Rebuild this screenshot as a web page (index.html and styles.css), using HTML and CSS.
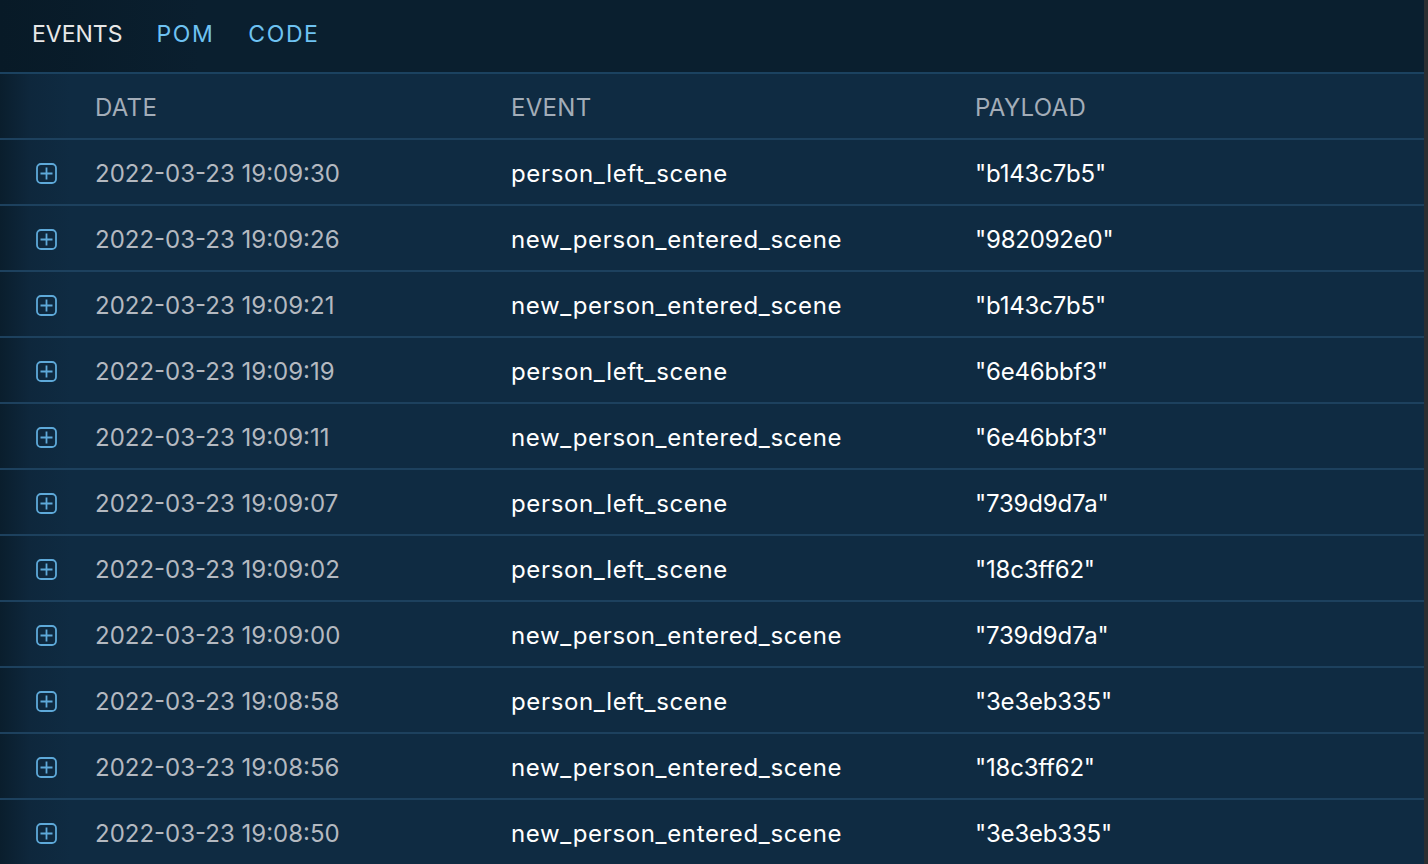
FILE: index.html
```html
<!DOCTYPE html>
<html>
<head>
<meta charset="utf-8">
<link rel="stylesheet" href="styles.css">
</head>
<body>
<div class="app">
  <div class="main">
    <nav class="tabs">
      <span class="tab active">EVENTS</span>
      <span class="tab">POM</span>
      <span class="tab">CODE</span>
    </nav>
    <div class="table">
      <div class="row head">
        <span class="c-icon"></span>
        <span class="c-date">DATE</span>
        <span class="c-event">EVENT</span>
        <span class="c-payload">PAYLOAD</span>
      </div>
      <div class="row"><span class="c-icon"><svg class="plus" viewBox="0 0 21 21"><rect x="1" y="1" width="19" height="19" rx="4"/><path d="M10.5 4.5v12M4.5 10.5h12"/></svg></span><span class="c-date">2022-03-23 19:09:30</span><span class="c-event">person_left_scene</span><span class="c-payload">"b143c7b5"</span></div>
      <div class="row"><span class="c-icon"><svg class="plus" viewBox="0 0 21 21"><rect x="1" y="1" width="19" height="19" rx="4"/><path d="M10.5 4.5v12M4.5 10.5h12"/></svg></span><span class="c-date">2022-03-23 19:09:26</span><span class="c-event">new_person_entered_scene</span><span class="c-payload">"982092e0"</span></div>
      <div class="row"><span class="c-icon"><svg class="plus" viewBox="0 0 21 21"><rect x="1" y="1" width="19" height="19" rx="4"/><path d="M10.5 4.5v12M4.5 10.5h12"/></svg></span><span class="c-date">2022-03-23 19:09:21</span><span class="c-event">new_person_entered_scene</span><span class="c-payload">"b143c7b5"</span></div>
      <div class="row"><span class="c-icon"><svg class="plus" viewBox="0 0 21 21"><rect x="1" y="1" width="19" height="19" rx="4"/><path d="M10.5 4.5v12M4.5 10.5h12"/></svg></span><span class="c-date">2022-03-23 19:09:19</span><span class="c-event">person_left_scene</span><span class="c-payload">"6e46bbf3"</span></div>
      <div class="row"><span class="c-icon"><svg class="plus" viewBox="0 0 21 21"><rect x="1" y="1" width="19" height="19" rx="4"/><path d="M10.5 4.5v12M4.5 10.5h12"/></svg></span><span class="c-date">2022-03-23 19:09:11</span><span class="c-event">new_person_entered_scene</span><span class="c-payload">"6e46bbf3"</span></div>
      <div class="row"><span class="c-icon"><svg class="plus" viewBox="0 0 21 21"><rect x="1" y="1" width="19" height="19" rx="4"/><path d="M10.5 4.5v12M4.5 10.5h12"/></svg></span><span class="c-date">2022-03-23 19:09:07</span><span class="c-event">person_left_scene</span><span class="c-payload">"739d9d7a"</span></div>
      <div class="row"><span class="c-icon"><svg class="plus" viewBox="0 0 21 21"><rect x="1" y="1" width="19" height="19" rx="4"/><path d="M10.5 4.5v12M4.5 10.5h12"/></svg></span><span class="c-date">2022-03-23 19:09:02</span><span class="c-event">person_left_scene</span><span class="c-payload">"18c3ff62"</span></div>
      <div class="row"><span class="c-icon"><svg class="plus" viewBox="0 0 21 21"><rect x="1" y="1" width="19" height="19" rx="4"/><path d="M10.5 4.5v12M4.5 10.5h12"/></svg></span><span class="c-date">2022-03-23 19:09:00</span><span class="c-event">new_person_entered_scene</span><span class="c-payload">"739d9d7a"</span></div>
      <div class="row"><span class="c-icon"><svg class="plus" viewBox="0 0 21 21"><rect x="1" y="1" width="19" height="19" rx="4"/><path d="M10.5 4.5v12M4.5 10.5h12"/></svg></span><span class="c-date">2022-03-23 19:08:58</span><span class="c-event">person_left_scene</span><span class="c-payload">"3e3eb335"</span></div>
      <div class="row"><span class="c-icon"><svg class="plus" viewBox="0 0 21 21"><rect x="1" y="1" width="19" height="19" rx="4"/><path d="M10.5 4.5v12M4.5 10.5h12"/></svg></span><span class="c-date">2022-03-23 19:08:56</span><span class="c-event">new_person_entered_scene</span><span class="c-payload">"18c3ff62"</span></div>
      <div class="row"><span class="c-icon"><svg class="plus" viewBox="0 0 21 21"><rect x="1" y="1" width="19" height="19" rx="4"/><path d="M10.5 4.5v12M4.5 10.5h12"/></svg></span><span class="c-date">2022-03-23 19:08:50</span><span class="c-event">new_person_entered_scene</span><span class="c-payload">"3e3eb335"</span></div>
    </div>
  </div>
  <div class="scrollbar"></div>
</div>
</body>
</html>
```
FILE: styles.css
```css
* { box-sizing: border-box; }
html, body { margin: 0; padding: 0; height: 100%; overflow: hidden; }
body {
  font-family: Inter, "Noto Sans", sans-serif;
  background: #0f2b42;
}
.app { display: flex; height: 864px; }
.main { flex: 1; display: flex; flex-direction: column; min-width: 0; }
.scrollbar { width: 4px; background: #2b2e31; }
.tabs {
  flex-shrink: 0;
  height: 74px;
  display: flex;
  align-items: center;
  gap: 34px;
  padding-left: 32px;
  padding-bottom: 4px;
  background: linear-gradient(to right, #081a27, #0a1f2f 200px);
  border-bottom: 2px solid #1b4260;
}
.tab {
  font-size: 23px;
  color: #6ec2f2;
  letter-spacing: 1.6px;
}
.tab.active { color: #e8e8e8; letter-spacing: 0; }
.table {
  flex: 1;
  min-height: 0;
  overflow: hidden;
  background: linear-gradient(to right, #0a1e2d 0, #0e273c 30px, #0f2b42 70px);
}
.row {
  display: flex;
  align-items: center;
  height: 66px;
  padding-top: 2px;
  border-bottom: 2px solid #1d415e;
  font-size: 24px;
}
.c-icon { width: 95px; padding-left: 36px; display: flex; align-items: center; }
.c-date { width: 416px; color: #b4b9c0; }
.c-event { width: 464px; color: #ffffff; letter-spacing: 0.65px; }
.c-payload { color: #ffffff; letter-spacing: -0.2px; }
.head .c-date, .head .c-event, .head .c-payload { color: #a3adb8; letter-spacing: 0.3px; }
.plus { width: 21px; height: 21px; fill: none; stroke: #5ea9d9; stroke-width: 1.8; }
```
